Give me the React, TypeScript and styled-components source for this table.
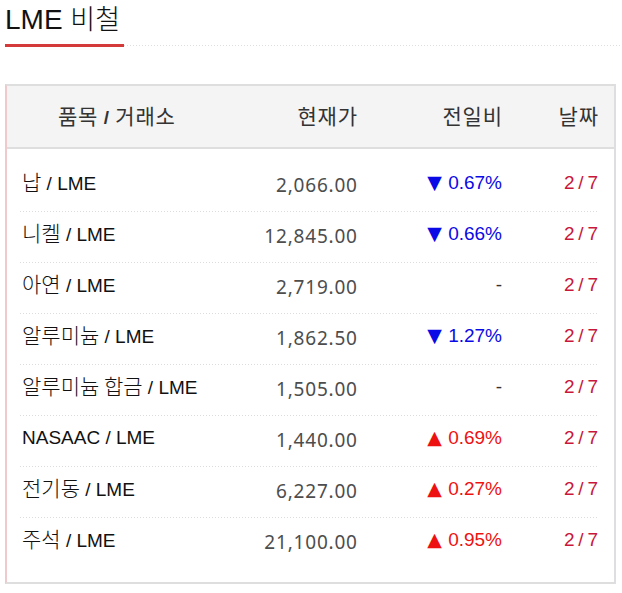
import React from "react";
import styled, { createGlobalStyle } from "styled-components";

const GlobalStyle = createGlobalStyle`
  html, body { margin: 0; padding: 0; background: #fff; }
  body { font-family: "Liberation Sans", "Noto Sans CJK KR", sans-serif; }
`;

const Page = styled.div`
  padding: 0 6px 0 5px;
  width: 622px;
  box-sizing: border-box;
`;

const TitleRow = styled.div`
  display: flex;
  align-items: flex-end;
  margin-right: -6px;
`;

const Title = styled.h2`
  margin: 0;
  height: 47px;
  padding: 0 4px 0 0;
  box-sizing: border-box;
  font-family: "Liberation Sans", "Noto Sans CJK KR", sans-serif;
  font-size: 28px;
  font-weight: normal;
  line-height: 36px;
  color: #111;
  border-bottom: 3px solid #d43a3a;
  white-space: nowrap;
`;

const TitleKr = styled.span`
  font-family: "Noto Sans CJK KR", sans-serif;
  font-size: 27px;
  font-weight: 300;
`;

const TitleFill = styled.div`
  flex: 1;
  height: 1px;
  margin-bottom: 1px;
  background: linear-gradient(to right, #dedede 1px, transparent 1px) left top / 3px 1px repeat-x;
`;

const Box = styled.div`
  margin-top: 37px;
  border: 2px solid #dedede;
  border-left-color: #f0c9cd;
`;

const cols = `220px 117px 145px 96px`;

const Header = styled.div`
  display: grid;
  grid-template-columns: ${cols};
  align-items: center;
  height: 61px;
  padding: 0 16px 0 13px;
  background: #f4f4f4;
  border-bottom: 2px solid #dedede;
  font-family: "Noto Sans CJK KR", "Liberation Sans", sans-serif;
  font-size: 21px;
  line-height: 26px;
  letter-spacing: 0.8px;
  color: #333;
`;

const HeadCell = styled.div<{ $align?: "left" | "right" }>`
  text-align: ${(p) => p.$align ?? "right"};
  padding-left: ${(p) => (p.$align === "left" ? "38px" : "0")};
  margin-right: -0.8px;
  padding-bottom: 4px;
  white-space: nowrap;
`;

const Slash = styled.span`
  font-family: "Liberation Sans", sans-serif;
  font-weight: bold;
  font-size: 19px;
  line-height: 1;
`;

const Body = styled.div`
  padding: 12px 16px 14px 13px;
`;

const Row = styled.div<{ $last?: boolean }>`
  display: grid;
  grid-template-columns: ${cols};
  align-items: center;
  height: 50px;
  padding-bottom: ${(p) => (p.$last ? "0" : "1px")};
  box-sizing: content-box;
  background: ${(p) =>
    p.$last
      ? "none"
      : "linear-gradient(to right, #dcdcdc 1px, transparent 1px) left bottom / 3px 1px repeat-x"};
`;

const Cell = styled.div`
  height: 24px;
  line-height: 24px;
  margin-bottom: 6px;
  white-space: nowrap;
`;

const Name = styled(Cell)`
  padding-left: 2px;
  font-family: "Liberation Sans", "Noto Sans CJK KR", sans-serif;
  font-size: 19px;
  color: #111;
`;

const NameKr = styled.span`
  font-family: "Noto Sans CJK KR", sans-serif;
  font-size: 21px;
  font-weight: 300;
  line-height: 1;
`;

const Price = styled(Cell)`
  text-align: right;
  font-family: "Noto Sans", "Liberation Sans", sans-serif;
  font-size: 19px;
  letter-spacing: 0.8px;
  margin-right: -0.8px;
  color: #4d4d4d;
  margin-bottom: 2px;
`;

const Change = styled(Cell)<{ $dir: "up" | "down" | "none" }>`
  text-align: right;
  font-family: "Liberation Sans", sans-serif;
  font-size: 19px;
  color: ${(p) => (p.$dir === "up" ? "#ee1111" : p.$dir === "down" ? "#0a0ae6" : "#333")};
`;

const Arrow = styled.span`
  font-family: "DejaVu Sans", sans-serif;
  font-size: 19px;
  line-height: 1;
  margin-right: 1px;
`;

const DateCell = styled(Cell)`
  text-align: right;
  font-family: "Liberation Sans", sans-serif;
  font-size: 19px;
  word-spacing: -1.5px;
  color: #c8173a;
`;

type Item = { kr?: string; price: string; dir: "up" | "down" | "none"; pct?: string; en?: string };

const items: Item[] = [
  { kr: "납", price: "2,066.00", dir: "down", pct: "0.67%" },
  { kr: "니켈", price: "12,845.00", dir: "down", pct: "0.66%" },
  { kr: "아연", price: "2,719.00", dir: "none" },
  { kr: "알루미늄", price: "1,862.50", dir: "down", pct: "1.27%" },
  { kr: "알루미늄 합금", price: "1,505.00", dir: "none" },
  { en: "NASAAC", price: "1,440.00", dir: "up", pct: "0.69%" },
  { kr: "전기동", price: "6,227.00", dir: "up", pct: "0.27%" },
  { kr: "주석", price: "21,100.00", dir: "up", pct: "0.95%" },
];

export default function App() {
  return (
    <Page>
      <GlobalStyle />
      <TitleRow>
        <Title>
          LME <TitleKr>비철</TitleKr>
        </Title>
        <TitleFill />
      </TitleRow>
      <Box>
        <Header>
          <HeadCell $align="left">
            품목 <Slash>/</Slash> 거래소
          </HeadCell>
          <HeadCell>현재가</HeadCell>
          <HeadCell>전일비</HeadCell>
          <HeadCell>날짜</HeadCell>
        </Header>
        <Body>
          {items.map((it, i) => (
            <Row key={it.price + i} $last={i === items.length - 1}>
              <Name>
                {it.kr ? <NameKr>{it.kr}</NameKr> : it.en} / LME
              </Name>
              <Price>{it.price}</Price>
              <Change $dir={it.dir}>
                {it.dir === "none" ? (
                  "-"
                ) : (
                  <>
                    <Arrow>{it.dir === "up" ? "▲" : "▼"}</Arrow> {it.pct}
                  </>
                )}
              </Change>
              <DateCell>2 / 7</DateCell>
            </Row>
          ))}
        </Body>
      </Box>
    </Page>
  );
}
